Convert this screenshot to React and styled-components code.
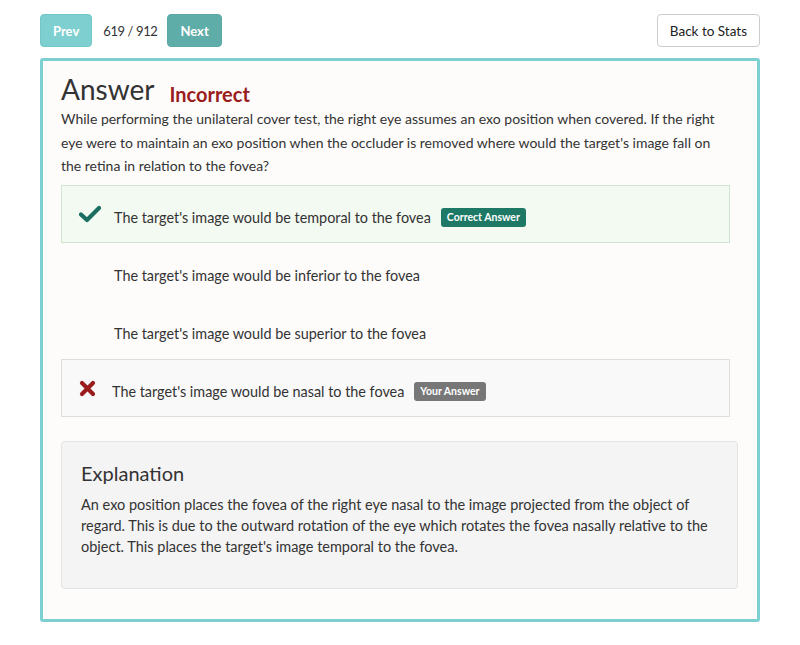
import React from 'react'
import styled, { createGlobalStyle } from 'styled-components'

const GlobalStyle = createGlobalStyle`
  body {
    margin: 0;
    background: #ffffff;
    font-family: Lato, "Open Sans", sans-serif;
    color: #333333;
  }
`

const options = [
  { text: "The target's image would be temporal to the fovea", state: 'correct' },
  { text: "The target's image would be inferior to the fovea" },
  { text: "The target's image would be superior to the fovea" },
  { text: "The target's image would be nasal to the fovea", state: 'wrong' },
]

const CheckIcon = () => (
  <svg width="22" height="18" viewBox="0 0 22 18">
    <path d="M2 9.5 L8 15 L20 3" fill="none" stroke="#1b6f62" strokeWidth="4.2" strokeLinecap="round" strokeLinejoin="round" />
  </svg>
)

const CrossIcon = () => (
  <svg width="17" height="17" viewBox="0 0 17 17">
    <path d="M3 3 L14 14 M14 3 L3 14" fill="none" stroke="#9b1c1c" strokeWidth="4.2" strokeLinecap="round" />
  </svg>
)

const App = () => {
  return (
    <Page>
      <GlobalStyle />
      <TopBar>
        <Nav>
          <NavButton>Prev</NavButton>
          <Counter>619 / 912</Counter>
          <NavButton $dark>Next</NavButton>
        </Nav>
        <BackButton>Back to Stats</BackButton>
      </TopBar>
      <Panel>
        <Header>
          <Title>Answer</Title>
          <Verdict>Incorrect</Verdict>
        </Header>
        <Question>
          While performing the unilateral cover test, the right eye assumes an exo position when covered. If the right
          eye were to maintain an exo position when the occluder is removed where would the target's image fall on
          the retina in relation to the fovea?
        </Question>
        <Options>
          {options.map((o, i) => (
            <Option key={i} $state={o.state}>
              {o.state === 'correct' && <IconSlot $w={35}><CheckIcon /></IconSlot>}
              {o.state === 'wrong' && <IconSlot $w={33}><CrossIcon /></IconSlot>}
              {!o.state && <IconSlot $w={35} />}
              <span>{o.text}</span>
              {o.state === 'correct' && <Badge $bg="#1d7866">Correct Answer</Badge>}
              {o.state === 'wrong' && <Badge $bg="#777777">Your Answer</Badge>}
            </Option>
          ))}
        </Options>
        <Explanation>
          <ExplanationTitle>Explanation</ExplanationTitle>
          <ExplanationText>
            An exo position places the fovea of the right eye nasal to the image projected from the object of
            regard. This is due to the outward rotation of the eye which rotates the fovea nasally relative to the
            object. This places the target's image temporal to the fovea.
          </ExplanationText>
        </Explanation>
      </Panel>
    </Page>
  )
}

export default App

const Page = styled.div`
  width: 720px;
  padding: 14px 40px 25px;
`

const TopBar = styled.div`
  display: flex;
  justify-content: space-between;
  align-items: center;
`

const Nav = styled.div`
  display: flex;
  align-items: center;
`

const NavButton = styled.button`
  height: 33px;
  padding: 0 12px;
  border: 1px solid ${p => (p.$dark ? '#5aa9a5' : '#72c7c7')};
  border-radius: 4px;
  background: ${p => (p.$dark ? '#5fada9' : '#7ecfcf')};
  color: #ffffff;
  font-family: Lato, sans-serif;
  font-weight: 700;
  font-size: 13px;
`

const Counter = styled.span`
  margin: 0 10px 0 11px;
  font-size: 13px;
  letter-spacing: -0.4px;
  color: #333;
`

const BackButton = styled.button`
  height: 33px;
  padding: 0 12px;
  border: 1px solid #cccccc;
  border-radius: 4px;
  background: #ffffff;
  color: #222;
  font-family: Lato, sans-serif;
  font-size: 13.5px;
`

const Panel = styled.div`
  margin-top: 11px;
  border: 3px solid #7dd0cf;
  border-radius: 3px;
  background: #fdfcfb;
  padding: 10px 19px 30px 18px;
`

const Header = styled.div`
  display: flex;
  align-items: flex-end;
`

const Title = styled.h1`
  margin: 0;
  font-size: 28px;
  font-weight: 400;
  line-height: 36px;
  color: #333;
`

const Verdict = styled.span`
  margin-left: 15px;
  margin-bottom: 1px;
  font-size: 20px;
  font-weight: 700;
  color: #9b1c1c;
`

const Question = styled.p`
  margin: 0 8px 7px 0;
  font-size: 14px;
  line-height: 23.5px;
  color: #333;
`

const Options = styled.div`
  display: flex;
  flex-direction: column;
  margin-right: 8px;
`

const Option = styled.div`
  display: flex;
  align-items: center;
  height: 58px;
  box-sizing: border-box;
  padding: 7px 17px 0;
  font-size: 14.4px;
  color: #333;
  border: 1px solid
    ${p => (p.$state === 'correct' ? '#cfe5cf' : p.$state === 'wrong' ? '#dddddd' : 'transparent')};
  background: ${p => (p.$state === 'correct' ? '#f3faf2' : p.$state === 'wrong' ? '#f9f9f9' : 'transparent')};
`

const IconSlot = styled.span`
  display: inline-flex;
  align-items: center;
  width: ${p => p.$w}px;
  flex-shrink: 0;
  margin-top: -6px;
`

const Badge = styled.span`
  margin-left: 10px;
  padding: 3px 6px;
  border-radius: 3px;
  background: ${p => p.$bg};
  color: #ffffff;
  font-size: 10.5px;
  font-weight: 700;
  line-height: 13px;
`

const Explanation = styled.div`
  margin-top: 24px;
  background: #f4f4f4;
  border: 1px solid #e3e3e3;
  border-radius: 4px;
  padding: 17px 19px 31px;
`

const ExplanationTitle = styled.h3`
  margin: 0 0 7px;
  font-size: 20px;
  font-weight: 400;
  color: #333;
  line-height: 28px;
`

const ExplanationText = styled.p`
  margin: 0;
  font-size: 14.5px;
  line-height: 21px;
  color: #333;
`
